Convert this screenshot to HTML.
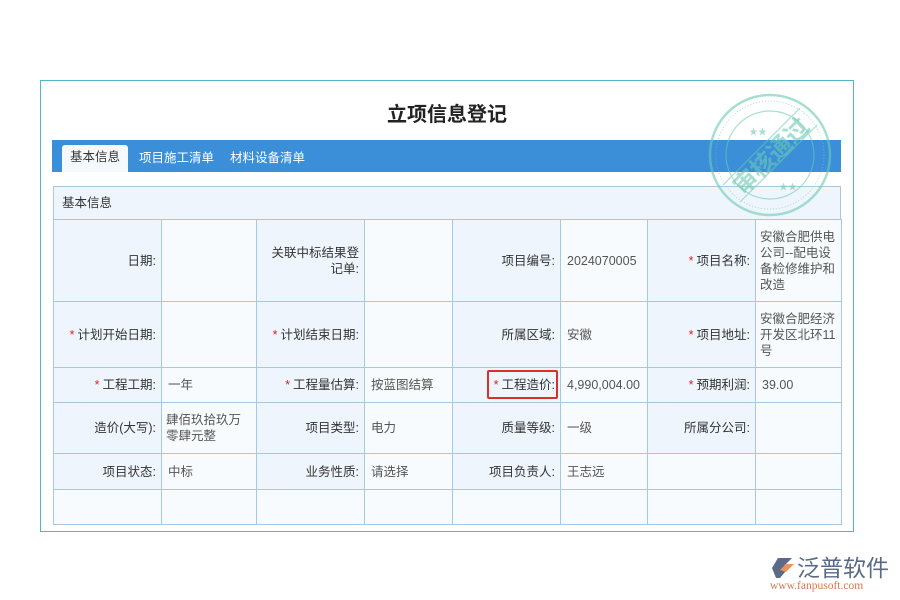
<!DOCTYPE html>
<html><head><meta charset="utf-8"><style>
*{margin:0;padding:0;box-sizing:border-box}
body{width:900px;height:600px;background:#fff;font-family:"Liberation Sans","Noto Sans CJK SC",sans-serif;position:relative;overflow:hidden}
.outer{position:absolute;left:40px;top:80px;width:814px;height:452px;border:1px solid #52b6bf}
.title{position:absolute;left:0;width:894px;top:98px;text-align:center;font-size:20px;font-weight:bold;color:#222}
.tabs{position:absolute;left:52px;top:140px;width:789px;height:32px;background:#3a8fd8}
.tab{position:absolute;top:7px;font-size:12.5px;color:#fff}
.tab.act{left:10px;top:5px;height:27px;width:66px;background:#f5f9fd;color:#333;border-radius:3px 3px 0 0;text-align:center;line-height:25px}
.hdr{position:absolute;left:53px;top:186px;width:788px;height:34px;background:#eef5fc;border:1px solid #a9c8e0;font-size:12.5px;color:#333;line-height:32px;padding-left:8px}
table{position:absolute;left:53px;top:219px;width:788px;border-collapse:collapse;table-layout:fixed;font-size:12.5px}
td{border:1px solid #a9c8e0;padding:0 6px;line-height:16px;vertical-align:middle}
td.l{background:#eef5fc;text-align:right;color:#333;padding-right:5px}
td.v{background:#f8fbfe;color:#555}
.s{color:#d22;margin-right:3px}
.box{position:absolute;left:487px;top:370px;width:71px;height:29px;border:2px solid #d9302c;border-radius:2px}
</style></head><body>
<div class="outer"></div>
<div class="title">立项信息登记</div>
<div class="tabs">
<div class="tab act">基本信息</div>
<div class="tab" style="left:87px">项目施工清单</div>
<div class="tab" style="left:178px">材料设备清单</div>
</div>
<div class="hdr">基本信息</div>
<table>
<colgroup><col style="width:108px"><col style="width:95px"><col style="width:108px"><col style="width:88px"><col style="width:108px"><col style="width:87px"><col style="width:108px"><col style="width:86px"></colgroup>
<tr style="height:82px"><td class="l">日期:</td><td class="v"></td><td class="l">关联中标结果登记单:</td><td class="v"></td><td class="l">项目编号:</td><td class="v">2024070005</td><td class="l"><span class="s">*</span>项目名称:</td><td class="v" style="padding:0 4px">安徽合肥供电公司--配电设备检修维护和改造</td></tr>
<tr style="height:66px"><td class="l"><span class="s">*</span>计划开始日期:</td><td class="v"></td><td class="l"><span class="s">*</span>计划结束日期:</td><td class="v"></td><td class="l">所属区域:</td><td class="v">安徽</td><td class="l"><span class="s">*</span>项目地址:</td><td class="v" style="padding:0 4px">安徽合肥经济开发区北环11号</td></tr>
<tr style="height:35px"><td class="l"><span class="s">*</span>工程工期:</td><td class="v">一年</td><td class="l"><span class="s">*</span>工程量估算:</td><td class="v">按蓝图结算</td><td class="l"><span class="s">*</span>工程造价:</td><td class="v">4,990,004.00</td><td class="l"><span class="s">*</span>预期利润:</td><td class="v">39.00</td></tr>
<tr style="height:51px"><td class="l">造价(大写):</td><td class="v" style="padding:0 4px">肆佰玖拾玖万零肆元整</td><td class="l">项目类型:</td><td class="v">电力</td><td class="l">质量等级:</td><td class="v">一级</td><td class="l">所属分公司:</td><td class="v"></td></tr>
<tr style="height:36px"><td class="l">项目状态:</td><td class="v">中标</td><td class="l">业务性质:</td><td class="v">请选择</td><td class="l">项目负责人:</td><td class="v">王志远</td><td class="v"></td><td class="v"></td></tr>
<tr style="height:35px"><td class="v"></td><td class="v"></td><td class="v"></td><td class="v"></td><td class="v"></td><td class="v"></td><td class="v"></td><td class="v"></td></tr>
</table>
<div class="box"></div>
<svg style="position:absolute;left:705px;top:90px" width="130" height="130" viewBox="0 0 130 130">
<g fill="none" stroke="#6ccab4" opacity=".6">
<circle cx="65" cy="65" r="60" stroke-width="2.5"/>
<circle cx="65" cy="65" r="54" stroke-width="1" stroke-dasharray="1 2"/>
<circle cx="65" cy="65" r="44" stroke-width="1.2"/>
<line x1="18" y1="95" x2="95" y2="18" stroke-width="1.2"/>
<line x1="35" y1="112" x2="112" y2="35" stroke-width="1.2"/>
</g>
<text x="65" y="75" transform="rotate(-45 65 65)" text-anchor="middle" font-size="24" font-weight="bold" fill="#6ccab4" opacity=".6" font-family="Noto Sans CJK SC,sans-serif">审核通过</text>
<text x="44" y="45" fill="#6ccab4" font-size="9" opacity=".6">★★</text>
<text x="74" y="100" fill="#6ccab4" font-size="9" opacity=".6">★★</text>
</svg>
<svg style="position:absolute;left:770px;top:556px" width="26" height="24" viewBox="0 0 26 24"><path d="M2 12 L8 2 H22 L14 10 H20 L10 22 H6 Z" fill="#5a6a88"/><path d="M10 14 L16 8 H24 L16 16 Z" fill="#e8955a"/></svg>
<div style="position:absolute;left:797px;top:552px;font-size:23px;color:#5a6a88;font-family:'Noto Sans CJK SC',sans-serif;line-height:28px">泛普软件</div>
<div style="position:absolute;left:770px;top:580px;font-size:11.5px;color:#d27a50;font-family:'Liberation Serif',serif">www.fanpusoft.com</div>
</body></html>
